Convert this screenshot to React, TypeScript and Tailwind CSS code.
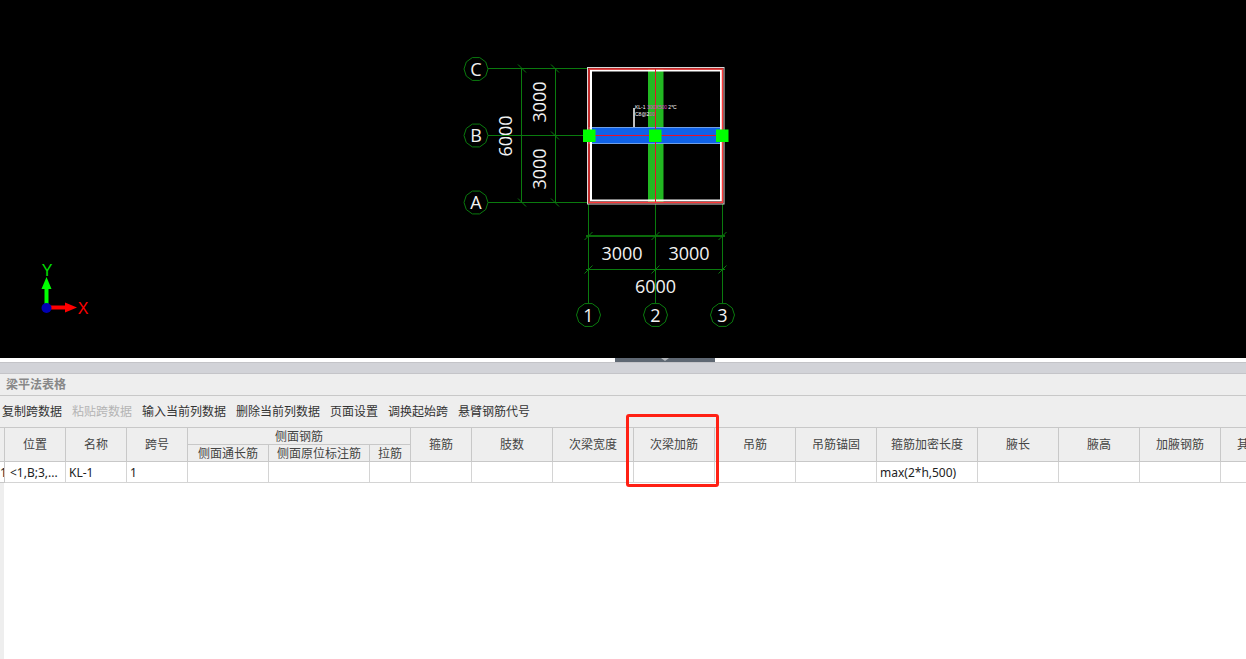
import React from 'react';

const cjk = "font-['Noto_Sans','Noto_Sans_CJK_SC',sans-serif]";

const cols = [5, 61, 61, 61, 81, 101, 41, 61, 81, 81, 81, 81, 81, 101, 81, 81, 81, 81];
const gridStyle = {
  gridTemplateColumns: cols.map((c) => `${c}px`).join(' '),
  gridTemplateRows: '17px 17px 21px',
};

const toolbarItems = [
  { label: '复制跨数据' },
  { label: '粘贴跨数据', disabled: true },
  { label: '输入当前列数据' },
  { label: '删除当前列数据' },
  { label: '页面设置' },
  { label: '调换起始跨' },
  { label: '悬臂钢筋代号' },
];

const leadHeaders = ['位置', '名称', '跨号'];
const tailHeaders = ['箍筋', '肢数', '次梁宽度', '次梁加筋', '吊筋', '吊筋锚固', '箍筋加密长度', '腋长', '腋高', '加腋钢筋', '其他箍筋'];
const subHeaders = ['侧面通长筋', '侧面原位标注筋', '拉筋'];
const rowValues = ['<1,B;3,...', 'KL-1', '1', '', '', '', '', '', '', '', '', '', 'max(2*h,500)', '', '', '', ''];

const green = '#0a7a0e';

const AxisBubble: React.FC<{ cx: number; cy: number; label: string }> = ({ cx, cy, label }) => {
  const points = Array.from({ length: 10 }, (_, i) => {
    const a = (Math.PI / 5) * i;
    return `${cx + 12 * Math.cos(a)},${cy + 12 * Math.sin(a)}`;
  }).join(' ');
  return (
    <g>
      <polygon points={points} fill="none" stroke={green} strokeWidth="1" />
      <text x={cx} y={cy + 6.5} textAnchor="middle" fontSize="18" fill="#f2f2f2" fontFamily="Open Sans">
        {label}
      </text>
    </g>
  );
};

const Tick: React.FC<{ x: number; y: number }> = ({ x, y }) => (
  <path d={`M${x - 4} ${y + 4}L${x + 4} ${y - 4}`} stroke={green} strokeWidth="1" />
);

const TickBack: React.FC<{ x: number; y: number }> = ({ x, y }) => (
  <path d={`M${x - 4} ${y - 4}L${x + 4} ${y + 4}`} stroke={green} strokeWidth="1" />
);

const DimText: React.FC<{ x: number; y: number; rotate?: boolean; children: string }> = ({ x, y, rotate, children }) => (
  <text
    x={x}
    y={y}
    textAnchor="middle"
    dominantBaseline="central"
    fontSize="18"
    fill="#f2f2f2"
    fontFamily="Open Sans"
    transform={rotate ? `rotate(-90 ${x} ${y})` : undefined}
  >
    {children}
  </text>
);

const Drawing = () => (
  <svg width="1246" height="358" viewBox="0 0 1246 358" className="block">
    {/* grid lines */}
    <g stroke={green} strokeWidth="1" fill="none">
      <path d="M488 68.5H588M488 135.5H588M488 202.5H588" />
      <path d="M521.5 68.5V202.5M555.5 68.5V202.5" />
      <path d="M588.5 204V303M655.5 204V303M722.5 204V303" />
      <path d="M586 269.5H725" />
    </g>
    <path d="M586 236H725" stroke="#0a6a0a" strokeWidth="2" />
    {[68.5, 202.5].map((y) => (
      <React.Fragment key={y}>
        <TickBack x={522} y={y} />
        <TickBack x={555} y={y} />
      </React.Fragment>
    ))}
    <TickBack x={555} y={135.5} />
    {[588.5, 655.5, 722.5].map((x) => (
      <React.Fragment key={x}>
        <Tick x={x} y={236} />
        <Tick x={x} y={269.5} />
      </React.Fragment>
    ))}

    {/* beams */}
    <rect x="648" y="69" width="15.5" height="133" fill="#22b822" />
    <rect x="589" y="127.5" width="133" height="16" fill="#0f62e8" stroke="#6f9fe8" strokeWidth="1" />

    {/* wall outlines */}
    <rect x="587.5" y="67.5" width="136.5" height="136.5" fill="none" stroke="#d8d8d8" strokeWidth="1" />
    <rect x="591" y="70.5" width="130" height="130" fill="none" stroke="#ffffff" strokeWidth="2" />
    <rect x="589" y="69" width="133.5" height="133.5" fill="none" stroke="#ff3838" strokeWidth="1.5" />
    <path d="M655.5 69V202M589 135.5H722" stroke="#e8102a" strokeWidth="1" />

    {/* beam label */}
    <path d="M634 108V127" stroke="#ffffff" strokeWidth="1.5" />
    <text x="635" y="109" fontSize="5" fill="#ffffff" fontFamily="Liberation Sans">
      KL-1 <tspan fill="#e040d0">300X500</tspan> 2*C
    </text>
    <text x="635" y="116" fontSize="5" fill="#ffffff" fontFamily="Liberation Sans">
      C8@2<tspan fill="#e040d0">00</tspan>
    </text>

    {/* column nodes */}
    {[583, 649, 716].map((x) => (
      <rect key={x} x={x} y="129.5" width="12.5" height="12.5" fill="#00ff00" />
    ))}

    <DimText x={539} y={102} rotate>3000</DimText>
    <DimText x={539} y={169} rotate>3000</DimText>
    <DimText x={505} y={136} rotate>6000</DimText>
    <DimText x={622} y={253}>3000</DimText>
    <DimText x={689} y={253}>3000</DimText>
    <DimText x={655.5} y={286}>6000</DimText>

    <AxisBubble cx={476} cy={69} label="C" />
    <AxisBubble cx={476} cy={135.5} label="B" />
    <AxisBubble cx={476} cy={202.5} label="A" />
    <AxisBubble cx={588.5} cy={315} label="1" />
    <AxisBubble cx={655.5} cy={315} label="2" />
    <AxisBubble cx={722.5} cy={315} label="3" />

    {/* axis marker */}
    <path d="M46.5 308V288" stroke="#00ff00" strokeWidth="4" />
    <path d="M41.5 289L46.5 277L51.5 289Z" fill="#00ff00" />
    <path d="M46 307.5H66" stroke="#ff0000" strokeWidth="4" />
    <path d="M65 302.5L77 307.5L65 312.5Z" fill="#ff0000" />
    <circle cx="46.5" cy="308" r="5" fill="#0000b4" />
    <text x="47" y="276" textAnchor="middle" fontSize="16" fill="#00e000" fontFamily="Liberation Sans">Y</text>
    <text x="83" y="314" textAnchor="middle" fontSize="16" fill="#ff0000" fontFamily="Liberation Sans">X</text>
  </svg>
);

const headerCell = 'flex items-center justify-center whitespace-nowrap overflow-hidden border-r border-b border-[#c8c8c8] bg-[#eeeeee] pt-[1px] text-[#444444]';

const App: React.FC = () => (
  <div className={`relative flex h-[659px] w-[1246px] flex-col overflow-hidden bg-white text-[12px] ${cjk}`}>
    <div className="h-[358px] bg-black">
      <Drawing />
    </div>

    {/* splitter */}
    <div className="h-[4px] bg-white">
      <div className="ml-[615px] flex h-[4px] w-[100px] justify-center bg-[#5f6873]">
        <div className="h-0 w-0 border-x-[4px] border-t-[3px] border-x-transparent border-t-[#b4b8bd]" />
      </div>
    </div>
    <div className="h-[12px] border-y border-[#c4c4c8] bg-[#d2d3d8]" />

    <div className="flex h-[22px] shrink-0 items-center border-b border-[#c8c8c8] bg-[#eeeeee] pl-[6px] font-bold text-[#888888]">
      梁平法表格
    </div>

    <div className="flex h-[32px] shrink-0 items-center gap-[10px] border-b border-[#c8c8c8] bg-[#eeeeee] pl-[2px] text-[#333333]">
      {toolbarItems.map((item) => (
        <span key={item.label} className={item.disabled ? 'text-[#b4b4b4]' : ''}>
          {item.label}
        </span>
      ))}
    </div>

    <div className="grid w-[1300px] shrink-0" style={gridStyle}>
      <div className={`${headerCell} row-span-2`} />
      {leadHeaders.map((h) => (
        <div key={h} className={`${headerCell} row-span-2`}>{h}</div>
      ))}
      <div className={`${headerCell} col-span-3`}>侧面钢筋</div>
      {tailHeaders.map((h) => (
        <div key={h} className={`${headerCell} row-span-2`}>{h}</div>
      ))}
      {subHeaders.map((h) => (
        <div key={h} className={headerCell}>{h}</div>
      ))}

      <div className="overflow-hidden border-r border-b border-[#c8c8c8] bg-white text-[#222222] leading-[22px]">1</div>
      {rowValues.map((v, i) => (
        <div
          key={i}
          className={`overflow-hidden whitespace-nowrap border-r border-b border-[#d4d4d4] bg-white leading-[22px] text-[#222222] ${i === 0 ? 'pl-[5px]' : 'pl-[3px]'}`}
        >
          {v}
        </div>
      ))}
    </div>

    <div className="w-[4px] flex-1 bg-[#eeeeee]" />

    {/* annotation box drawn over the table */}
    <div className="absolute left-[626px] top-[414px] h-[73px] w-[93px] rounded-[3px] border-[3px] border-[#ff2014]" />
  </div>
);

export default App;
